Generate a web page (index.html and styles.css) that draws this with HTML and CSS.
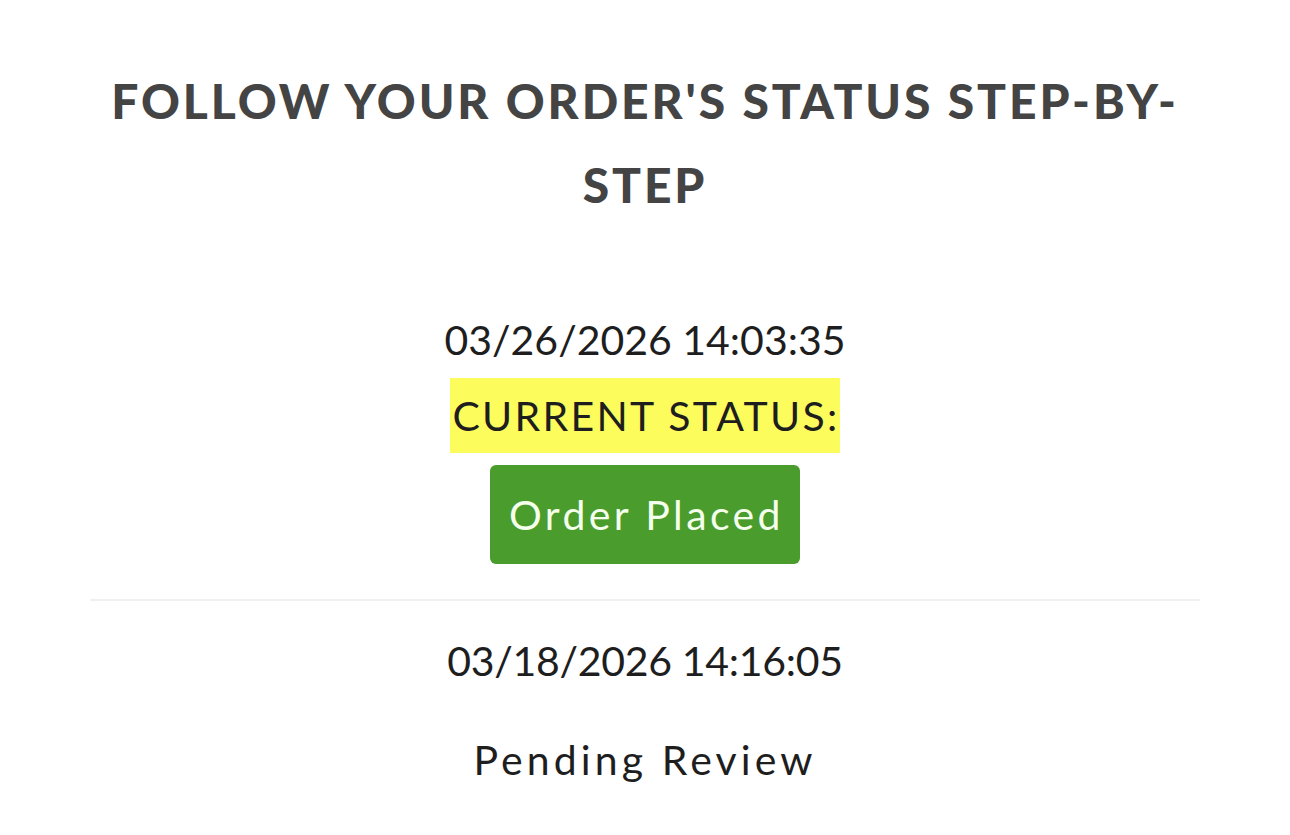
FILE: index.html
```html
<!DOCTYPE html>
<html>
<head>
<meta charset="utf-8">
<link rel="stylesheet" href="styles.css">
</head>
<body>
<main class="page">
  <h1 class="title">FOLLOW YOUR ORDER'S STATUS STEP-BY-STEP</h1>
  <section class="entry current">
    <div class="date">03/26/2026 14:03:35</div>
    <div class="label-row"><span class="label">CURRENT STATUS:</span></div>
    <div class="badge-row"><span class="badge">Order Placed</span></div>
  </section>
  <hr class="divider">
  <section class="entry past">
    <div class="date">03/18/2026 14:16:05</div>
    <div class="status">Pending Review</div>
  </section>
</main>
</body>
</html>
```
FILE: styles.css
```css
html, body {
  margin: 0;
  padding: 0;
  background: #ffffff;
}
body {
  font-family: "Lato", "Open Sans", sans-serif;
  color: #1e1e1e;
}
.page {
  padding: 59px 90px 0;
  text-align: center;
}
.title {
  margin: 0 0 89px;
  font-size: 48px;
  line-height: 84px;
  font-weight: 900;
  letter-spacing: 2.9px;
  color: #444444;
}
.entry {
  display: flex;
  flex-direction: column;
  align-items: center;
}
.date {
  font-size: 41px;
  line-height: 48px;
  color: #1e1e1e;
}
.label-row {
  margin-top: 14px;
}
.label {
  display: inline-block;
  background: #fdfc5d;
  font-size: 41px;
  line-height: 75px;
  letter-spacing: 2.3px;
  padding: 0 0 0 2px;
  color: #1e1e1e;
}
.badge-row {
  margin-top: 12px;
}
.badge {
  display: inline-block;
  background: #4a9c2c;
  color: #f4ffec;
  font-size: 41px;
  line-height: 99px;
  letter-spacing: 3.4px;
  padding: 0 16px 0 19px;
  border-radius: 6px;
}
.divider {
  margin: 35px 0 0;
  border: 0;
  border-top: 2px solid #f0f0f0;
}
.past .date {
  margin-top: 36px;
  letter-spacing: -0.3px;
}
.status {
  margin-top: 51px;
  font-size: 41px;
  line-height: 48px;
  letter-spacing: 4.1px;
}
```
